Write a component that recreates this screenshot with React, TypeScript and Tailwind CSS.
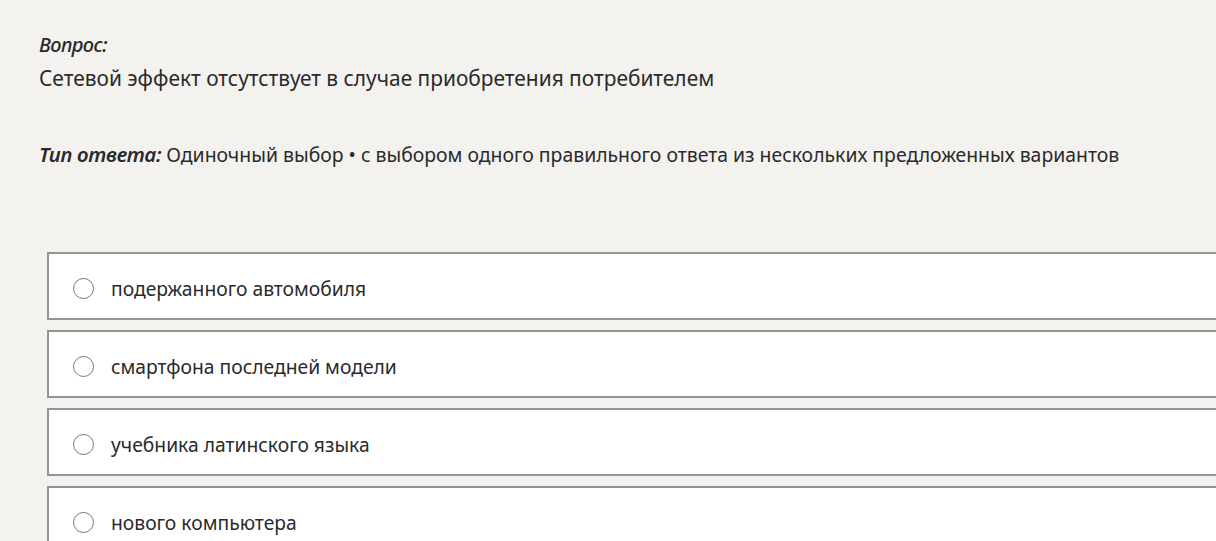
const options = [
  'подержанного автомобиля',
  'смартфона последней модели',
  'учебника латинского языка',
  'нового компьютера',
]

const Radio = () => (
  <span className="block h-[21px] w-[21px] shrink-0 rounded-full border-[1.5px] border-[#777777] bg-white" />
)

export default function App() {
  return (
    <div
      className="h-[541px] w-[1216px] overflow-hidden bg-[#f3f2ef] text-[#2a2a2a]"
      style={{ fontFamily: '"Noto Sans", "Open Sans", sans-serif' }}
    >
      <div className="pl-[39px] pt-[32px]">
        <p className="text-[20px] italic font-medium leading-[26px] tracking-[-0.6px]">Вопрос:</p>
        <p className="mt-[6px] text-[20.9px] leading-[28px]">
          Сетевой эффект отсутствует в случае приобретения потребителем
        </p>
        <p className="mt-[48px] text-[19.4px] leading-[28px]">
          <span className="text-[20.4px] italic font-semibold tracking-[-0.3px]">Тип ответа:</span> Одиночный выбор • с
          выбором одного правильного ответа из нескольких предложенных вариантов
        </p>
      </div>
      <div className="ml-[47px] mt-[83px] flex w-[1200px] flex-col gap-[10px]">
        {options.map((o) => (
          <div
            key={o}
            className="flex h-[68px] items-center gap-[17px] border-2 border-r-0 border-[#949494] bg-white pl-[24px] pt-[5px]"
          >
            <Radio />
            <span className="text-[19.3px] leading-[28px]">{o}</span>
          </div>
        ))}
      </div>
    </div>
  )
}
